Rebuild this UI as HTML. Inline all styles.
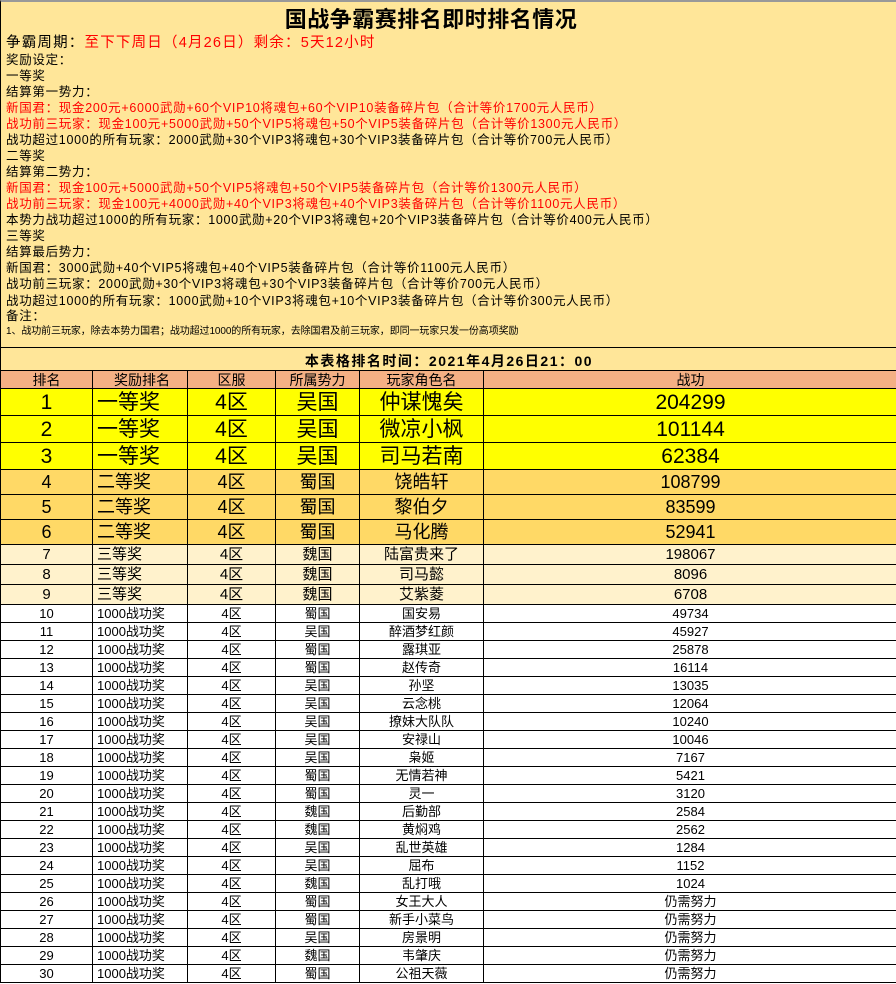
<!DOCTYPE html>
<html><head><meta charset="utf-8"><style>
*{margin:0;padding:0;box-sizing:border-box}
body{width:896px;height:984px;overflow:hidden;background:#fff;font-family:"Liberation Sans","Noto Sans CJK SC","WenQuanYi Zen Hei",sans-serif;color:#000;position:relative}
#top{position:absolute;left:0;top:0;width:896px;height:370px;background:#FFE699;border-top:2px solid #999;border-left:1px solid #000}
#title{position:absolute;left:0;top:3px;width:860px;text-align:center;font-size:22px;font-weight:bold;line-height:30px;letter-spacing:0.5px}
.l{position:absolute;left:5px;font-size:12.5px;line-height:16px;white-space:nowrap;letter-spacing:0.7px}
.r{color:#f00}
#l1{font-size:14.5px;letter-spacing:1.2px}
#sep{position:absolute;left:0;top:345px;width:896px;border-top:1px solid #000}
#time{position:absolute;left:0;top:348px;width:896px;text-align:center;font-size:14px;font-weight:bold;line-height:22px;letter-spacing:1.5px}
table{position:absolute;left:0;top:370px;border-collapse:collapse;table-layout:fixed;width:897px}
td{border:1px solid #000;text-align:center;padding:0;white-space:nowrap;overflow:hidden;font-size:13px;line-height:1}
td:nth-child(2){text-align:left;padding-left:4px}
tr.h td{background:#F4B084;height:18px;font-size:14px}
tr.a td{background:#FFFF00;height:27px;font-size:21px}
tr.b td{background:#FFD966;height:25px;font-size:18px}
tr.c td{background:#FFF2CC;height:20px;font-size:15px}
tr.d td{height:18px;font-size:13px}
</style></head><body>
<div id="top">
<div id="title">国战争霸赛排名即时排名情况</div>
<div class="l" id="l1" style="top:33px">争霸周期：<span class="r">至下下周日（4月26日）剩余：5天12小时</span></div>
<div class="l" style="top:50px">奖励设定：</div>
<div class="l" style="top:66px">一等奖</div>
<div class="l" style="top:82px">结算第一势力：</div>
<div class="l r" style="top:98px">新国君：现金200元+6000武勋+60个VIP10将魂包+60个VIP10装备碎片包（合计等价1700元人民币）</div>
<div class="l r" style="top:114px">战功前三玩家：现金100元+5000武勋+50个VIP5将魂包+50个VIP5装备碎片包（合计等价1300元人民币）</div>
<div class="l" style="top:130px">战功超过1000的所有玩家：2000武勋+30个VIP3将魂包+30个VIP3装备碎片包（合计等价700元人民币）</div>
<div class="l" style="top:146px">二等奖</div>
<div class="l" style="top:162px">结算第二势力：</div>
<div class="l r" style="top:178px">新国君：现金100元+5000武勋+50个VIP5将魂包+50个VIP5装备碎片包（合计等价1300元人民币）</div>
<div class="l r" style="top:194px">战功前三玩家：现金100元+4000武勋+40个VIP3将魂包+40个VIP3装备碎片包（合计等价1100元人民币）</div>
<div class="l" style="top:210px">本势力战功超过1000的所有玩家：1000武勋+20个VIP3将魂包+20个VIP3装备碎片包（合计等价400元人民币）</div>
<div class="l" style="top:226px">三等奖</div>
<div class="l" style="top:242px">结算最后势力：</div>
<div class="l" style="top:258px">新国君：3000武勋+40个VIP5将魂包+40个VIP5装备碎片包（合计等价1100元人民币）</div>
<div class="l" style="top:274px">战功前三玩家：2000武勋+30个VIP3将魂包+30个VIP3装备碎片包（合计等价700元人民币）</div>
<div class="l" style="top:291px">战功超过1000的所有玩家：1000武勋+10个VIP3将魂包+10个VIP3装备碎片包（合计等价300元人民币）</div>
<div class="l" style="top:306px">备注：</div>
<div class="l" style="top:322px;font-size:10px;letter-spacing:-0.1px">1、战功前三玩家，除去本势力国君；战功超过1000的所有玩家，去除国君及前三玩家，即同一玩家只发一份高项奖励</div>
<div id="sep"></div>
<div id="time">本表格排名时间：2021年4月26日21：00</div>
</div>
<table>
<colgroup><col style="width:92px"><col style="width:95px"><col style="width:88px"><col style="width:84px"><col style="width:124px"><col style="width:414px"></colgroup>
<tr class="h"><td>排名</td><td style="text-align:center">奖励排名</td><td>区服</td><td>所属势力</td><td>玩家角色名</td><td>战功</td></tr>
<tr class="a"><td>1</td><td>一等奖</td><td>4区</td><td>吴国</td><td>仲谋愧矣</td><td>204299</td></tr>
<tr class="a"><td>2</td><td>一等奖</td><td>4区</td><td>吴国</td><td>微凉小枫</td><td>101144</td></tr>
<tr class="a"><td>3</td><td>一等奖</td><td>4区</td><td>吴国</td><td>司马若南</td><td>62384</td></tr>
<tr class="b"><td>4</td><td>二等奖</td><td>4区</td><td>蜀国</td><td>饶皓轩</td><td>108799</td></tr>
<tr class="b"><td>5</td><td>二等奖</td><td>4区</td><td>蜀国</td><td>黎伯夕</td><td>83599</td></tr>
<tr class="b"><td>6</td><td>二等奖</td><td>4区</td><td>蜀国</td><td>马化腾</td><td>52941</td></tr>
<tr class="c"><td>7</td><td>三等奖</td><td>4区</td><td>魏国</td><td>陆富贵来了</td><td>198067</td></tr>
<tr class="c"><td>8</td><td>三等奖</td><td>4区</td><td>魏国</td><td>司马懿</td><td>8096</td></tr>
<tr class="c"><td>9</td><td>三等奖</td><td>4区</td><td>魏国</td><td>艾紫菱</td><td>6708</td></tr>
<tr class="d"><td>10</td><td>1000战功奖</td><td>4区</td><td>蜀国</td><td>国安易</td><td>49734</td></tr>
<tr class="d"><td>11</td><td>1000战功奖</td><td>4区</td><td>吴国</td><td>醉酒梦红颜</td><td>45927</td></tr>
<tr class="d"><td>12</td><td>1000战功奖</td><td>4区</td><td>蜀国</td><td>露琪亚</td><td>25878</td></tr>
<tr class="d"><td>13</td><td>1000战功奖</td><td>4区</td><td>蜀国</td><td>赵传奇</td><td>16114</td></tr>
<tr class="d"><td>14</td><td>1000战功奖</td><td>4区</td><td>吴国</td><td>孙坚</td><td>13035</td></tr>
<tr class="d"><td>15</td><td>1000战功奖</td><td>4区</td><td>吴国</td><td>云念桃</td><td>12064</td></tr>
<tr class="d"><td>16</td><td>1000战功奖</td><td>4区</td><td>吴国</td><td>撩妹大队队</td><td>10240</td></tr>
<tr class="d"><td>17</td><td>1000战功奖</td><td>4区</td><td>吴国</td><td>安禄山</td><td>10046</td></tr>
<tr class="d"><td>18</td><td>1000战功奖</td><td>4区</td><td>吴国</td><td>枭姬</td><td>7167</td></tr>
<tr class="d"><td>19</td><td>1000战功奖</td><td>4区</td><td>蜀国</td><td>无情若神</td><td>5421</td></tr>
<tr class="d"><td>20</td><td>1000战功奖</td><td>4区</td><td>蜀国</td><td>灵一</td><td>3120</td></tr>
<tr class="d"><td>21</td><td>1000战功奖</td><td>4区</td><td>魏国</td><td>后勤部</td><td>2584</td></tr>
<tr class="d"><td>22</td><td>1000战功奖</td><td>4区</td><td>魏国</td><td>黄焖鸡</td><td>2562</td></tr>
<tr class="d"><td>23</td><td>1000战功奖</td><td>4区</td><td>吴国</td><td>乱世英雄</td><td>1284</td></tr>
<tr class="d"><td>24</td><td>1000战功奖</td><td>4区</td><td>吴国</td><td>屈布</td><td>1152</td></tr>
<tr class="d"><td>25</td><td>1000战功奖</td><td>4区</td><td>魏国</td><td>乱打哦</td><td>1024</td></tr>
<tr class="d"><td>26</td><td>1000战功奖</td><td>4区</td><td>蜀国</td><td>女王大人</td><td>仍需努力</td></tr>
<tr class="d"><td>27</td><td>1000战功奖</td><td>4区</td><td>蜀国</td><td>新手小菜鸟</td><td>仍需努力</td></tr>
<tr class="d"><td>28</td><td>1000战功奖</td><td>4区</td><td>吴国</td><td>房景明</td><td>仍需努力</td></tr>
<tr class="d"><td>29</td><td>1000战功奖</td><td>4区</td><td>魏国</td><td>韦肇庆</td><td>仍需努力</td></tr>
<tr class="d"><td>30</td><td>1000战功奖</td><td>4区</td><td>蜀国</td><td>公祖天薇</td><td>仍需努力</td></tr>
</table>
</body></html>
